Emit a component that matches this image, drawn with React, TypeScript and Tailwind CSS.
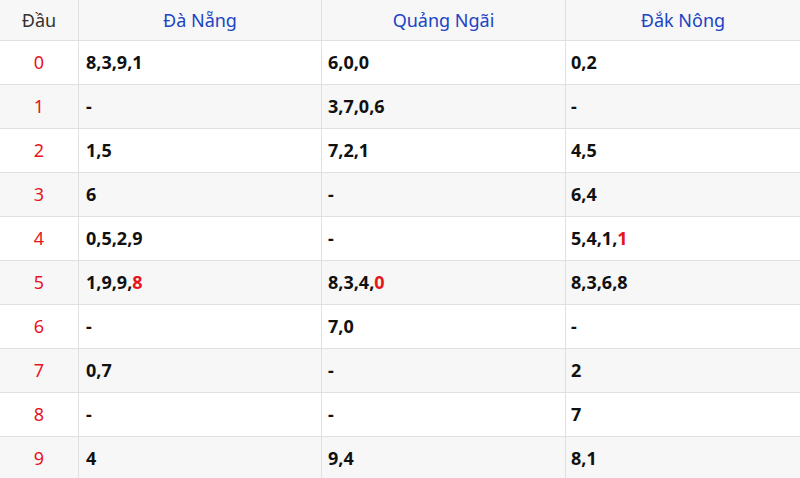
const rows: [string, string, string, string][] = [
  ["0", "8,3,9,1", "6,0,0", "0,2"],
  ["1", "-", "3,7,0,6", "-"],
  ["2", "1,5", "7,2,1", "4,5"],
  ["3", "6", "-", "6,4"],
  ["4", "0,5,2,9", "-", "5,4,1,*1"],
  ["5", "1,9,9,*8", "8,3,4,*0", "8,3,6,8"],
  ["6", "-", "7,0", "-"],
  ["7", "0,7", "-", "2"],
  ["8", "-", "-", "7"],
  ["9", "4", "9,4", "8,1"],
];

function Cell({ v }: { v: string }) {
  const i = v.indexOf("*");
  if (i < 0) return <>{v}</>;
  return (
    <>
      {v.slice(0, i)}
      <span className="text-[#e8141c]">{v.slice(i + 1)}</span>
    </>
  );
}

export default function App() {
  return (
    <div className="w-[800px] h-[478px] overflow-hidden bg-white font-['Liberation_Sans',Arial,sans-serif] text-[18px]">
      <div className="grid grid-cols-[79px_243px_244px_234px] h-[41px] bg-[#f7f7f7] border-b border-[#e0e0e0] items-center">
        <div className="text-center text-[#333] border-r border-[#e0e0e0] h-full flex items-center justify-center">Đầu</div>
        <div className="text-center text-[#2144c4] border-r border-[#e0e0e0] h-full flex items-center justify-center">Đà Nẵng</div>
        <div className="text-center text-[#2144c4] border-r border-[#e0e0e0] h-full flex items-center justify-center">Quảng Ngãi</div>
        <div className="text-center text-[#2144c4] h-full flex items-center justify-center">Đắk Nông</div>
      </div>
      {rows.map((r, idx) => (
        <div
          key={r[0]}
          className={`grid grid-cols-[79px_243px_244px_234px] h-[44px] border-b border-[#e0e0e0] ${idx % 2 ? "bg-[#f7f7f7]" : "bg-white"}`}
        >
          <div className="flex items-center justify-center text-[#e8141c] border-r border-[#e0e0e0]">{r[0]}</div>
          <div className="flex items-center pl-[7px] font-bold text-[#111] border-r border-[#e0e0e0]"><Cell v={r[1]} /></div>
          <div className="flex items-center pl-[6px] font-bold text-[#111] border-r border-[#e0e0e0]"><Cell v={r[2]} /></div>
          <div className="flex items-center pl-[5px] font-bold text-[#111]"><Cell v={r[3]} /></div>
        </div>
      ))}
    </div>
  );
}
